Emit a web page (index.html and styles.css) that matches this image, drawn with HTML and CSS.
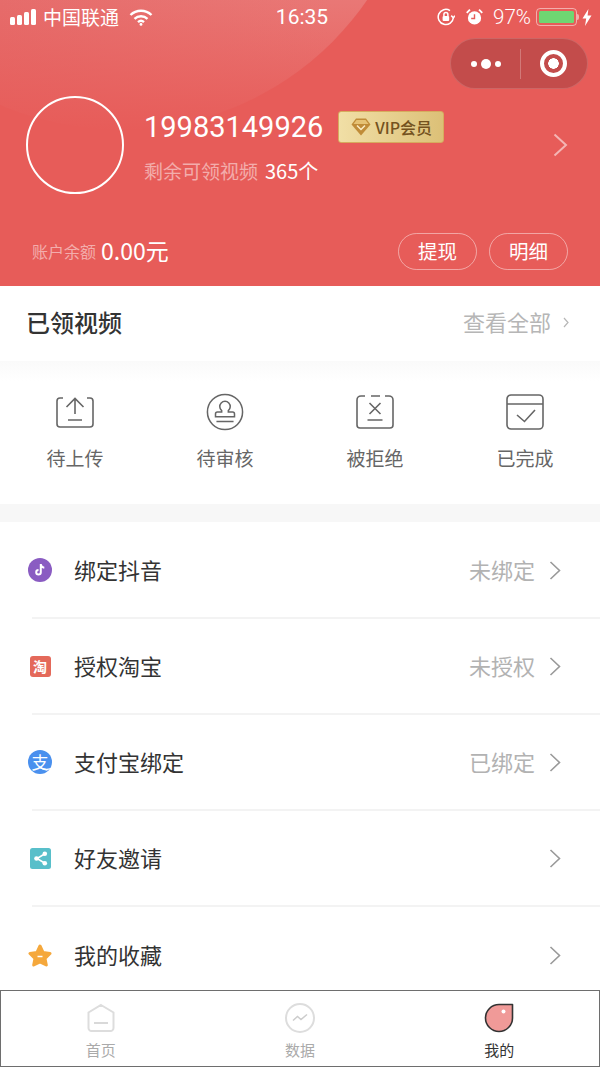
FILE: index.html
```html
<!DOCTYPE html>
<html lang="zh-CN">
<head>
  <meta charset="UTF-8" />
  <meta name="viewport" content="width=device-width, initial-scale=1.0"/>
  <title>我的</title>
  <link rel="stylesheet" href="styles.css">
</head>
<body>
  <div class="page">

    <header class="account">
      <div class="account-glow"></div>

      <div class="status-bar">
        <div class="status-left">
          <svg class="signal" width="27" height="16" viewBox="0 0 27 16">
            <rect x="0" y="8" width="5" height="8" rx="1.5"/>
            <rect x="7" y="6" width="5" height="10" rx="1.5"/>
            <rect x="14" y="3" width="5" height="13" rx="1.5"/>
            <rect x="21" y="0" width="5" height="16" rx="1.5"/>
          </svg>
          <span class="carrier">中国联通</span>
          <svg class="wifi" width="24" height="17" viewBox="0 0 24 17">
            <path d="M1.5 6a15 15 0 0 1 21 0"/>
            <path d="M5.5 9.8a9.5 9.5 0 0 1 13 0"/>
            <path d="M9 13.2a4.5 4.5 0 0 1 6 0"/>
            <circle cx="12" cy="15.4" r="1.4" class="wifi-dot"/>
          </svg>
        </div>
        <div class="status-time">16:35</div>
        <div class="status-right">
          <svg width="18" height="18" viewBox="0 0 18 18" class="rotate-lock">
            <path d="M16.4 9.5A7.6 7.6 0 1 1 13 2.6"/>
            <path d="M14.2 7.6l2.2 2.2 1.4-2.2" />
            <rect x="5.6" y="8" width="6.6" height="5" rx="1" class="solid"/>
            <path d="M6.9 8V6.5a2 2 0 0 1 4 0V8"/>
          </svg>
          <svg width="17" height="18" viewBox="0 0 18 18" class="alarm">
            <circle cx="9" cy="10" r="7"/>
            <path d="M9 6v4.5H5.5" class="alarm-hand"/>
            <path d="M0.8 4.6L4.2 1.2M17.2 4.6L13.8 1.2" class="alarm-bell"/>
          </svg>
          <span class="battery-pct">97%</span>
          <div class="battery"><div class="battery-fill"></div></div>
          <div class="battery-tip"></div>
          <svg width="10" height="17" viewBox="0 0 10 17" class="bolt">
            <path d="M6.4 0L0.5 9.6h3.7L3 17l6.5-10.4H5.6z"/>
          </svg>
        </div>
      </div>

      <div class="capsule">
        <div class="capsule-dots"><i></i><i class="big"></i><i></i></div>
        <div class="capsule-line"></div>
        <div class="capsule-close"><i></i></div>
      </div>

      <div class="profile">
        <div class="avatar"></div>
        <div class="profile-info">
          <div class="name-row">
            <span class="phone">19983149926</span>
            <span class="vip">
              <svg width="20" height="18" viewBox="0 0 20 18">
                <path d="M5 0.5h10l4.500 6L10 17.500 0.500 6.500z" fill="#c08c38"/>
                <path d="M5.500 2h9l3 4H2.500z" fill="#e6c274"/>
                <path d="M6 7.500l4 4 4-4" fill="none" stroke="#fbeec6" stroke-width="1.500"/>
              </svg>
              VIP会员
            </span>
          </div>
          <div class="remain"><span class="remain-label">剩余可领视频</span><span class="remain-count">365个</span></div>
        </div>
        <svg class="profile-arrow" width="15" height="24" viewBox="0 0 15 24">
          <path d="M1.5 1.5L13 12 1.5 22.5"/>
        </svg>
      </div>

      <div class="balance">
        <span class="balance-label">账户余额</span>
        <span class="balance-value">0.00元</span>
        <div class="balance-actions">
          <a class="pill">提现</a>
          <a class="pill">明细</a>
        </div>
      </div>
    </header>

    <section class="videos-head">
      <h2>已领视频</h2>
      <div class="see-all">
        查看全部
        <svg width="6" height="11" viewBox="0 0 6 11"><path d="M1 1l4 4.5L1 10"/></svg>
      </div>
    </section>

    <section class="video-states">
      <div class="state">
        <svg width="40" height="36" viewBox="0 0 40 36">
          <path d="M8 4H5a3 3 0 0 0-3 3v23a3 3 0 0 0 3 3h30a3 3 0 0 0 3-3V7a3 3 0 0 0-3-3h-3"/>
          <path d="M20 20V5M11.500 13L20 4.500 28.500 13M13 26h14"/>
        </svg>
        <span>待上传</span>
      </div>
      <div class="state">
        <svg width="40" height="40" viewBox="0 0 40 40">
          <circle cx="20" cy="20" r="18.500"/>
          <path d="M16.500 18.500a5.500 5.500 0 1 1 7 0v1.500h4.500a2 2 0 0 1 2 2v3H10v-3a2 2 0 0 1 2-2h4.500zM11 30h18"/>
        </svg>
        <span>待审核</span>
      </div>
      <div class="state">
        <svg width="40" height="36" viewBox="0 0 40 36">
          <path d="M10 2H6a4 4 0 0 0-4 4v25a3 3 0 0 0 3 3h30a3 3 0 0 0 3-3V6a4 4 0 0 0-4-4h-4M16 2h9"/>
          <path d="M14.500 9l11 11M25.500 9l-11 11M12.500 26h15"/>
        </svg>
        <span>被拒绝</span>
      </div>
      <div class="state">
        <svg width="40" height="38" viewBox="0 0 40 38">
          <rect x="2" y="2" width="36" height="34" rx="4"/>
          <path d="M2 11h36M12 22l7.500 6.500L30 17"/>
        </svg>
        <span>已完成</span>
      </div>
    </section>

    <div class="gap"></div>

    <ul class="menu">
      <li class="menu-row">
        <span class="menu-icon">
          <svg width="24" height="24" viewBox="0 0 24 24">
            <circle cx="12" cy="12" r="12" fill="#8a5cc2"/>
            <path d="M12.800 6v8.200a2.300 2.300 0 1 1-2.300-2.300M12.800 6.500c.4 2 1.800 3 3.500 3.200" fill="none" stroke="#fff" stroke-width="2"/>
          </svg>
        </span>
        <span class="menu-title">绑定抖音</span>
        <span class="menu-value">未绑定</span>
        <svg class="menu-arrow" width="12" height="19" viewBox="0 0 12 19"><path d="M1.500 1L10.500 9.500 1.500 18"/></svg>
      </li>
      <li class="menu-row">
        <span class="menu-icon"><span class="tao">淘</span></span>
        <span class="menu-title">授权淘宝</span>
        <span class="menu-value">未授权</span>
        <svg class="menu-arrow" width="12" height="19" viewBox="0 0 12 19"><path d="M1.500 1L10.500 9.500 1.500 18"/></svg>
      </li>
      <li class="menu-row">
        <span class="menu-icon">
          <span class="ali">支
            <svg width="24" height="24" viewBox="0 0 24 24"><path d="M12 17.500c3 2 6 2.500 11 1.200" fill="none" stroke="#fff" stroke-width="1.300"/></svg>
          </span>
        </span>
        <span class="menu-title">支付宝绑定</span>
        <span class="menu-value">已绑定</span>
        <svg class="menu-arrow" width="12" height="19" viewBox="0 0 12 19"><path d="M1.500 1L10.500 9.500 1.500 18"/></svg>
      </li>
      <li class="menu-row">
        <span class="menu-icon">
          <svg width="21" height="21" viewBox="0 0 21 21">
            <rect width="21" height="21" rx="2.500" fill="#58bfca"/>
            <path d="M14.500 6L7 10.500l7.500 4.500" fill="none" stroke="#fff" stroke-width="1.500"/>
            <circle cx="14.800" cy="5.800" r="2.300" fill="#fff"/>
            <circle cx="6.500" cy="10.500" r="2.300" fill="#fff"/>
            <circle cx="14.800" cy="15.200" r="2.300" fill="#fff"/>
          </svg>
        </span>
        <span class="menu-title">好友邀请</span>
        <svg class="menu-arrow" width="12" height="19" viewBox="0 0 12 19"><path d="M1.500 1L10.500 9.500 1.500 18"/></svg>
      </li>
      <li class="menu-row">
        <span class="menu-icon">
          <svg width="24" height="23" viewBox="0 0 24 23">
            <path d="M12 2l3 6.500 7 1-5 5 1.300 6.500L12 17.800 5.700 21 7 14.500l-5-5 7-1z" fill="#f5a83c" stroke="#f5a83c" stroke-width="3" stroke-linejoin="round"/>
            <path d="M9.500 12.500h5" stroke="#fff" stroke-width="1.500"/>
          </svg>
        </span>
        <span class="menu-title">我的收藏</span>
        <svg class="menu-arrow" width="12" height="19" viewBox="0 0 12 19"><path d="M1.500 1L10.500 9.500 1.500 18"/></svg>
      </li>
    </ul>

    <nav class="tabbar">
      <a class="tab">
        <svg width="30" height="30" viewBox="0 0 30 30" class="tab-off">
          <path d="M15 2L27.500 9.500V25a3 3 0 0 1-3 3H5.500a3 3 0 0 1-3-3V9.500z"/>
          <path d="M8 20h14" class="tab-thin"/>
        </svg>
        <span>首页</span>
      </a>
      <a class="tab">
        <svg width="30" height="30" viewBox="0 0 30 30" class="tab-off">
          <circle cx="15" cy="15" r="14"/>
          <path d="M8 17.500l4.500-4 3.500 3 6-5" class="tab-thin"/>
        </svg>
        <span>数据</span>
      </a>
      <a class="tab tab-on">
        <svg width="30" height="30" viewBox="0 0 30 30">
          <path d="M28.500 1.500V15A13.500 13.500 0 1 1 15 1.500z" fill="#f09a98" stroke="#333" stroke-width="1.600" stroke-linejoin="round"/>
          <circle cx="19.500" cy="8.500" r="2" fill="#fff"/>
        </svg>
        <span>我的</span>
      </a>
    </nav>

  </div>
</body>
</html>
```

FILE: styles.css
```css
* {
  box-sizing: border-box;
}

body {
  margin: 0;
  font-family: "Noto Sans CJK SC", "Noto Sans", sans-serif;
  background: #fff;
  color: #333;
}

.page {
  position: relative;
  height: 1067px;
  overflow: hidden;
}

/* Red account header */
.account {
  position: relative;
  height: 286px;
  background: #e75c59;
  overflow: hidden;
  color: #fff;
}

.account-glow {
  position: absolute;
  left: -180px;
  top: -470px;
  width: 600px;
  height: 600px;
  border-radius: 50%;
  background:
    linear-gradient(to bottom, rgba(231, 92, 89, 0) 78%, #e75c59 100%),
    linear-gradient(to right, #e66c6b 30%, #e97876 85%);
}

.status-bar {
  position: relative;
  display: grid;
  grid-template-columns: 1fr auto 1fr;
  align-items: center;
  height: 34px;
  padding: 0 8px 0 10px;
}

.status-left,
.status-right {
  display: flex;
  align-items: center;
}

.status-right {
  justify-content: flex-end;
}

.signal {
  fill: #fff;
}

.carrier {
  margin-left: 6px;
  font-size: 19px;
  line-height: 24px;
}

.wifi {
  margin-left: 10px;
  fill: none;
  stroke: #fff;
  stroke-width: 2.4;
}

.wifi-dot {
  fill: #fff;
  stroke: none;
}

.status-time {
  margin-left: 2px;
  font-family: "Roboto", sans-serif;
  font-size: 21px;
}

.rotate-lock {
  fill: none;
  stroke: #fff;
  stroke-width: 1.5;
}

.rotate-lock .solid {
  fill: #fff;
  stroke: none;
}

.alarm {
  margin-left: 11px;
  fill: #fff;
}

.alarm-hand {
  fill: none;
  stroke: #e75c59;
  stroke-width: 1.5;
}

.alarm-bell {
  fill: none;
  stroke: #fff;
  stroke-width: 2;
}

.battery-pct {
  margin-left: 10px;
  font-family: "Roboto", sans-serif;
  font-size: 20.5px;
  font-weight: 300;
}

.battery {
  width: 41px;
  height: 18px;
  margin-left: 5px;
  padding: 2px;
  border: 1.5px solid rgba(255, 255, 255, 0.5);
  border-radius: 4px;
}

.battery-fill {
  height: 100%;
  border-radius: 1.5px;
  background: #6fd672;
}

.battery-tip {
  width: 2px;
  height: 6px;
  border-radius: 0 2px 2px 0;
  background: rgba(255, 255, 255, 0.5);
}

.bolt {
  margin-left: 3px;
  fill: #fff;
}

/* Mini program capsule */
.capsule {
  position: absolute;
  top: 38px;
  left: 450px;
  width: 138px;
  height: 51px;
  display: flex;
  align-items: center;
  border: 1px solid rgba(255, 255, 255, 0.15);
  border-radius: 26px;
  background: #c34c4b;
}

.capsule-dots {
  flex: 1;
  display: flex;
  align-items: center;
  justify-content: center;
  gap: 4px;
  padding-left: 2px;
}

.capsule-dots i {
  width: 6px;
  height: 6px;
  border-radius: 50%;
  background: #fff;
}

.capsule-dots i.big {
  width: 10px;
  height: 10px;
}

.capsule-line {
  width: 1px;
  height: 30px;
  background: rgba(255, 255, 255, 0.25);
}

.capsule-close {
  flex: 1;
  display: flex;
  align-items: center;
  justify-content: center;
}

.capsule-close i {
  display: flex;
  width: 27px;
  height: 27px;
  border: 4px solid #fff;
  border-radius: 50%;
  background: radial-gradient(circle, #fff 0 5px, transparent 5.5px);
}

/* Profile block */
.profile {
  position: relative;
  display: flex;
  align-items: center;
  margin-top: 62px;
  padding-left: 26px;
}

.avatar {
  width: 98px;
  height: 98px;
  border: 2px solid #fff;
  border-radius: 50%;
}

.profile-info {
  margin-left: 20px;
  padding-top: 5px;
}

.name-row {
  display: flex;
  align-items: center;
  height: 32px;
}

.phone {
  font-family: "Roboto", sans-serif;
  font-size: 29px;
}

.vip {
  display: flex;
  align-items: center;
  gap: 4px;
  width: 106px;
  height: 32px;
  margin-left: 15px;
  padding-left: 12px;
  border-radius: 3px;
  border: 1px solid #d6ac5e;
  background: linear-gradient(to right, #f1dfa6, #dcc077);
  color: #74521e;
  font-size: 16px;
  font-weight: 500;
}

.remain {
  display: flex;
  align-items: center;
  gap: 7px;
  margin-top: 15px;
  font-size: 19px;
  line-height: 26px;
}

.remain-label {
  color: rgba(255, 255, 255, 0.5);
}

.remain-count {
  font-size: 20px;
}

.profile-arrow {
  margin-left: auto;
  margin-right: 32px;
  fill: none;
  stroke: rgba(255, 255, 255, 0.55);
  stroke-width: 2;
}

.balance {
  position: relative;
  display: flex;
  align-items: center;
  margin-top: 39px;
  padding: 0 32px;
}

.balance-label {
  padding-bottom: 1px;
  color: rgba(255, 255, 255, 0.5);
  font-size: 16px;
}

.balance-value {
  margin-left: 5px;
  padding-bottom: 3px;
  font-size: 23px;
}

.balance-actions {
  display: flex;
  gap: 12px;
  margin-left: auto;
}

.pill {
  width: 79px;
  height: 37px;
  border: 1.5px solid rgba(255, 255, 255, 0.45);
  border-radius: 19px;
  font-size: 19.5px;
  line-height: 33px;
  text-align: center;
}

/* Claimed videos */
.videos-head {
  display: flex;
  align-items: center;
  justify-content: space-between;
  height: 75px;
  padding: 0 31px 5px 26px;
}

.videos-head h2 {
  margin: 0;
  font-size: 24px;
  font-weight: 500;
  color: #333;
}

.see-all {
  display: flex;
  align-items: center;
  gap: 12px;
  color: #b6b6b6;
  font-size: 22px;
}

.see-all svg {
  margin-top: 3px;
  fill: none;
  stroke: #b6b6b6;
  stroke-width: 1.2;
}

.video-states {
  display: grid;
  grid-template-columns: repeat(4, 1fr);
  height: 143px;
  padding-top: 32px;
  background: linear-gradient(to bottom, #fafafa, #fff 20px);
}

.state {
  display: flex;
  flex-direction: column;
  align-items: center;
  color: #666;
  font-size: 19px;
}

.state svg {
  height: 38px;
  fill: none;
  stroke: #666;
  stroke-width: 1.6;
}

.state span {
  margin-top: 13px;
  line-height: 28px;
}

.gap {
  height: 18px;
  background: #f7f7f7;
}

/* Settings list */
.menu {
  margin: 0;
  padding: 1px 0 0 32px;
  list-style: none;
}

.menu-row {
  position: relative;
  display: flex;
  align-items: center;
  height: 96px;
  padding-right: 39px;
  border-bottom: 2px solid #f3f3f3;
}

.menu-row:last-child {
  border-bottom: none;
}

.menu-icon {
  display: flex;
  align-items: center;
  justify-content: center;
  width: 24px;
  height: 24px;
  margin-left: -4px;
  margin-right: 22px;
}

.tao {
  display: block;
  width: 21px;
  height: 21px;
  border-radius: 3px;
  background: #e4695a;
  color: #fff;
  font-size: 14px;
  font-weight: 700;
  line-height: 20px;
  text-align: center;
}

.ali {
  position: relative;
  display: block;
  width: 24px;
  height: 24px;
  border-radius: 50%;
  background: #4a90ee;
  color: #fff;
  font-size: 17px;
  line-height: 23px;
  text-align: center;
}

/* swoosh laid over the glyph */
.ali svg {
  position: absolute;
  top: 0;
  left: 0;
}

.menu-title {
  padding-bottom: 2px;
  font-size: 22px;
  color: #333;
}

.menu-value {
  margin-left: auto;
  padding-bottom: 2px;
  color: #b2b2b2;
  font-size: 22px;
}

.menu-arrow {
  margin-left: 14px;
  fill: none;
  stroke: #999;
  stroke-width: 1.6;
}

.menu-title + .menu-arrow {
  margin-left: auto;
}

/* Bottom tab bar */
.tabbar {
  position: absolute;
  left: 0;
  right: 0;
  bottom: 0;
  display: grid;
  grid-template-columns: repeat(3, 1fr);
  height: 77px;
  padding-top: 12px;
  border: 1px solid #6e6e6e;
  background: #fff;
}

.tab {
  display: flex;
  flex-direction: column;
  align-items: center;
  color: #aaa;
  font-size: 15px;
}

.tab span {
  margin-top: 6px;
  line-height: 22px;
}

.tab-on {
  color: #333;
}

.tab-off {
  fill: none;
  stroke: #ddd;
  stroke-width: 2;
}

.tab-thin {
  stroke: #ccc;
  stroke-width: 1.5;
}
```
